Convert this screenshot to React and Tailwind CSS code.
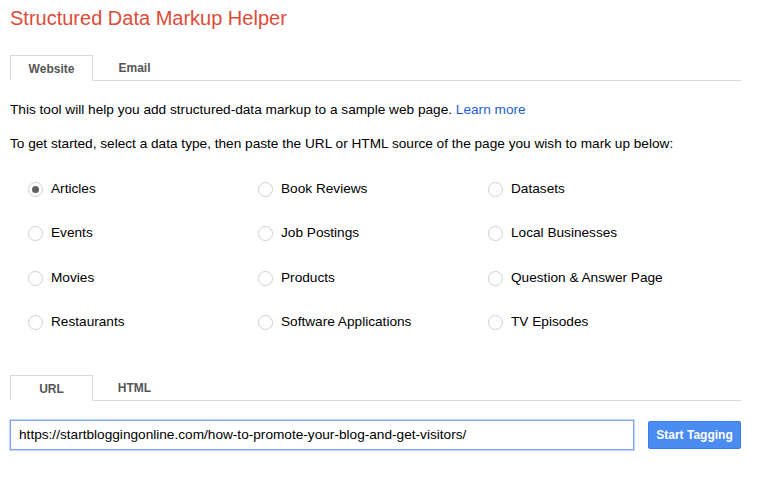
import { useState } from 'react';

const types = [
    'Articles', 'Book Reviews', 'Datasets',
    'Events', 'Job Postings', 'Local Businesses',
    'Movies', 'Products', 'Question & Answer Page',
    'Restaurants', 'Software Applications', 'TV Episodes',
];

const Tabs = ({ tabs, active, onChange }) => (
    <div className="flex items-end h-[26px] border-b border-[#d9d9d9] mr-[32px]">
        {tabs.map((t) => (
            <button
                key={t}
                onClick={() => onChange(t)}
                className={
                    t === active
                        ? 'w-[83px] h-[26px] pt-[2px] -mb-px border border-[#d9d9d9] border-b-white bg-white text-[12px] font-bold text-[#555]'
                        : 'w-[83px] h-[26px] pt-[2px] text-[12px] font-bold text-[#555]'
                }
            >
                {t}
            </button>
        ))}
    </div>
);

const Radio = ({ label, checked, onSelect }) => (
    <label className="flex items-center h-[20px] cursor-pointer" onClick={onSelect}>
        <span className="ml-[18px] w-[15px] h-[15px] rounded-full border border-[#cfcfcf] bg-white flex items-center justify-center">
            {checked && <span className="w-[7px] h-[7px] rounded-full bg-[#616161]" />}
        </span>
        <span className="ml-[8px] text-[13.65px] text-black">{label}</span>
    </label>
);

export default function App() {
    const [mode, setMode] = useState('Website');
    const [source, setSource] = useState('URL');
    const [selected, setSelected] = useState('Articles');
    const [url, setUrl] = useState('https://startbloggingonline.com/how-to-promote-your-blog-and-get-visitors/');

    return (
        <div className="w-[773px] h-[487px] bg-white pl-[10px] pt-[6px] font-['Liberation_Sans',Arial,sans-serif]">
            <h1 className="text-[20px] leading-[24px] text-[#dd4b39]">Structured Data Markup Helper</h1>

            <div className="mt-[25px]">
                <Tabs tabs={['Website', 'Email']} active={mode} onChange={setMode} />
            </div>

            <p className="mt-[20px] text-[13.65px] leading-[18px] text-black">
                This tool will help you add structured-data markup to a sample web page.{' '}
                <a href="#" className="text-[#1a5fd6]">Learn more</a>
            </p>
            <p className="mt-[16px] text-[13.65px] leading-[18px] text-black">
                To get started, select a data type, then paste the URL or HTML source of the page you wish to mark up below:
            </p>

            <div className="mt-[26px] grid grid-cols-[230px_230px_230px] gap-y-[24.5px]">
                {types.map((t) => (
                    <Radio key={t} label={t} checked={selected === t} onSelect={() => setSelected(t)} />
                ))}
            </div>

            <div className="mt-[42px]">
                <Tabs tabs={['URL', 'HTML']} active={source} onChange={setSource} />
            </div>

            <div className="mt-[19px] flex items-center">
                <input
                    value={url}
                    onChange={(e) => setUrl(e.target.value)}
                    className="w-[624px] h-[30px] border border-[#7da7f0] px-[8px] text-[13.65px] text-black outline-none shadow-[0_0_0_1px_#c5d9fb]"
                />
                <button className="ml-[14px] w-[93px] h-[28px] rounded-[2px] border border-[#3b7de8] bg-[#4a8cf2] text-[12px] font-bold text-white">
                    Start Tagging
                </button>
            </div>
        </div>
    );
}
